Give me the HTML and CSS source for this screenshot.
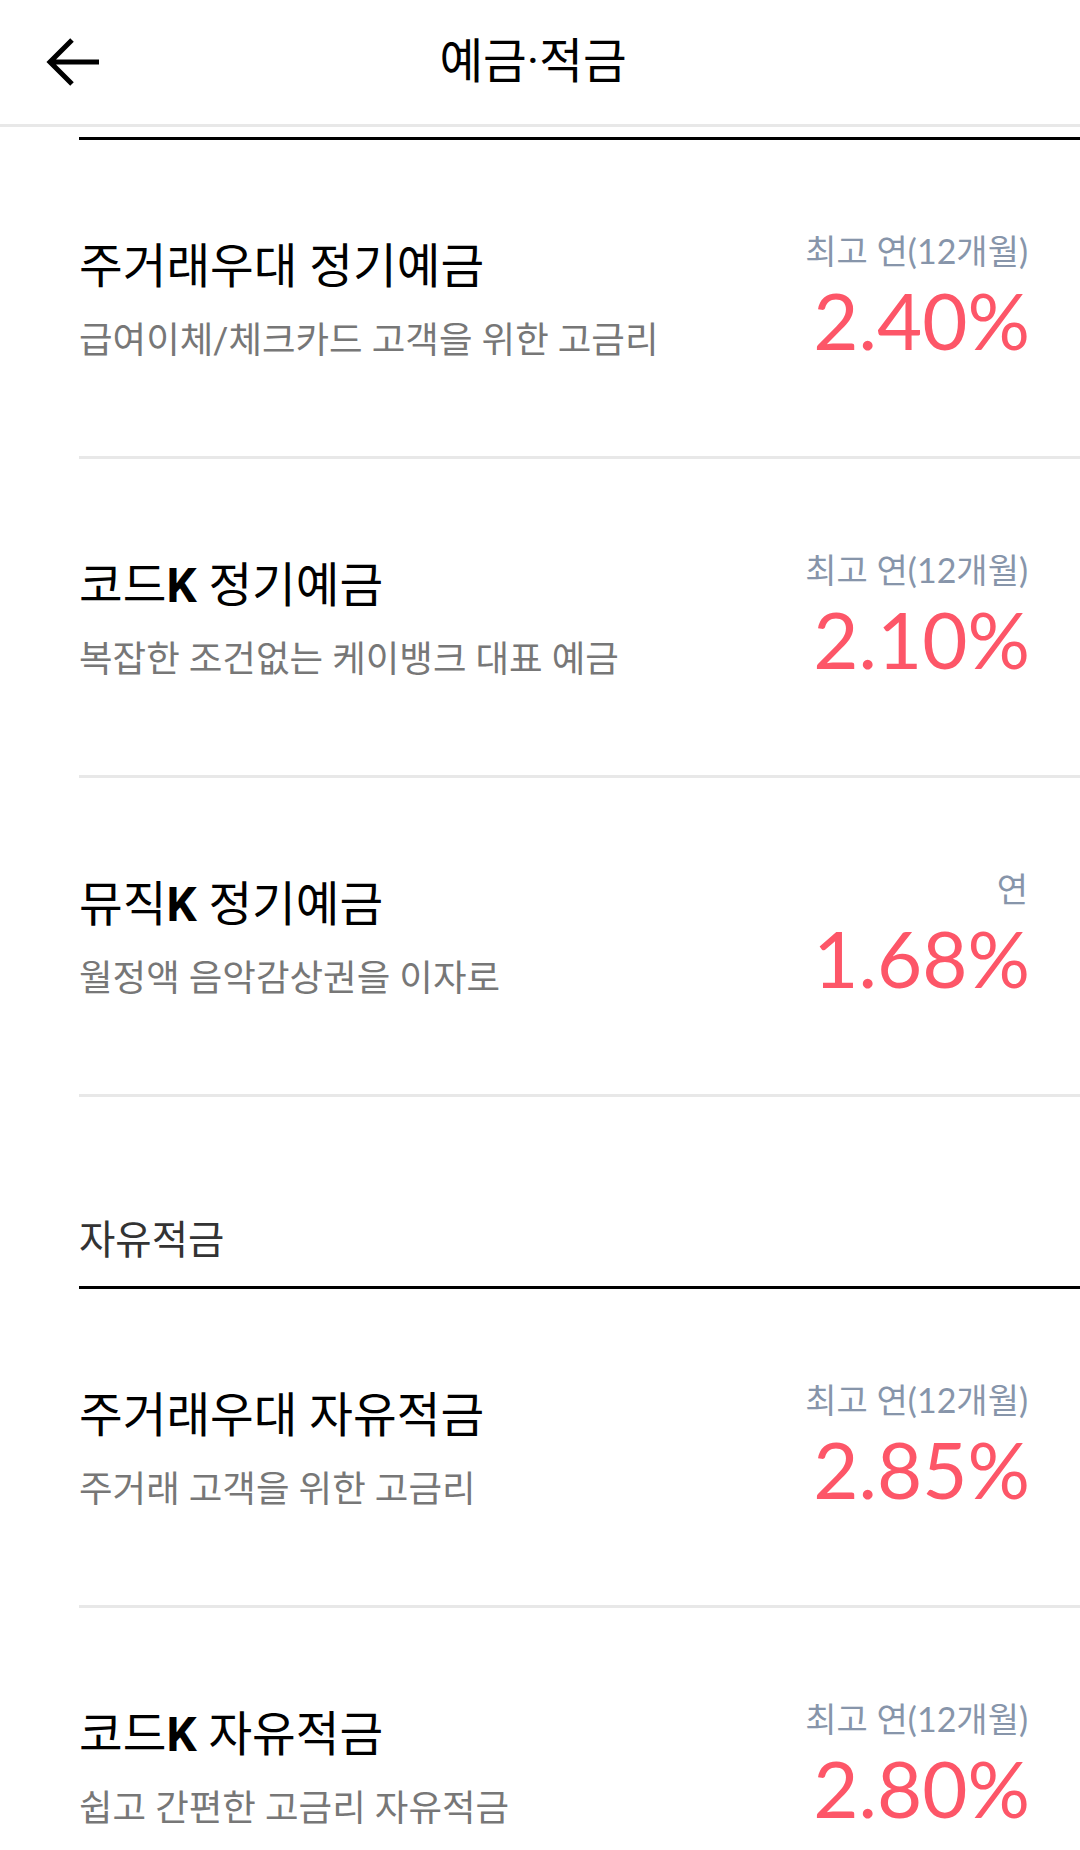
FILE: index.html
```html
<!DOCTYPE html>
<html lang="ko">
<head>
	<meta charset="UTF-8">
	<title>예금·적금</title>
	<link rel="stylesheet" href="styles.css">
</head>
<body>
	<div id="head">
		<a class="back" href="#">
			<svg width="56" height="50" viewBox="0 0 56 50"><path d="M54 25H5M27 3L5 25L27 47" fill="none" stroke="#000" stroke-width="5"/></svg>
		</a>
		<h1>예금·적금</h1>
		<span></span>
	</div>
	<div id="wrap">
		<ul class="list">
			<li>
				<div class="info">
					<h3>주거래우대 정기예금</h3>
					<p>급여이체/체크카드 고객을 위한 고금리</p>
				</div>
				<div class="rate">
					<span>최고 연(12개월)</span>
					<b>2.40%</b>
				</div>
			</li>
			<li>
				<div class="info">
					<h3>코드<em>K</em> 정기예금</h3>
					<p>복잡한 조건없는 케이뱅크 대표 예금</p>
				</div>
				<div class="rate">
					<span>최고 연(12개월)</span>
					<b>2.10%</b>
				</div>
			</li>
			<li>
				<div class="info">
					<h3>뮤직<em>K</em> 정기예금</h3>
					<p>월정액 음악감상권을 이자로</p>
				</div>
				<div class="rate">
					<span>연</span>
					<b>1.68%</b>
				</div>
			</li>
		</ul>
		<h2>자유적금</h2>
		<ul class="list">
			<li>
				<div class="info">
					<h3>주거래우대 자유적금</h3>
					<p>주거래 고객을 위한 고금리</p>
				</div>
				<div class="rate">
					<span>최고 연(12개월)</span>
					<b>2.85%</b>
				</div>
			</li>
			<li>
				<div class="info">
					<h3>코드<em>K</em> 자유적금</h3>
					<p>쉽고 간편한 고금리 자유적금</p>
				</div>
				<div class="rate">
					<span>최고 연(12개월)</span>
					<b>2.80%</b>
				</div>
			</li>
		</ul>
	</div>
</body>
</html>
```

FILE: styles.css
```css
*{margin:0;padding:0;list-style:none;}
body{font-family:Roboto,"Noto Sans CJK KR",sans-serif;background:#fff;color:#000;overflow:hidden;}
#head{height:124px;border-bottom:3px solid #e8e8e8;display:grid;grid-template-columns:1fr auto 1fr;align-items:center;}
#head .back{padding-left:45px;display:flex;}
#head h1{font-size:47.5px;font-weight:normal;line-height:60px;padding-right:14px;}
#wrap{padding-left:79px;margin-top:10px;}
.list{border-top:3px solid #000;}
.list li{border-bottom:3px solid #e8e8e8;display:flex;justify-content:space-between;padding:97px 52px 0 0;height:219px;}
.info h3{font-size:47.5px;font-weight:normal;line-height:60px;}
.info h3 em{font-style:normal;font-weight:bold;}
.info p{font-size:36.5px;color:#777;line-height:46px;margin-top:21px;}
.rate{display:flex;flex-direction:column;align-items:flex-end;margin-top:-6px;}
.rate span{font-family:Lato,"Noto Sans CJK KR",sans-serif;font-size:34px;line-height:40px;color:#8795aa;}
.rate b{font-family:Lato,sans-serif;font-weight:normal;font-size:78px;line-height:94px;color:#fd5668;margin:2px -2px 0 0;}
h2{font-size:39.5px;font-weight:normal;color:#333;line-height:50px;padding:119px 0 20px;}
```
